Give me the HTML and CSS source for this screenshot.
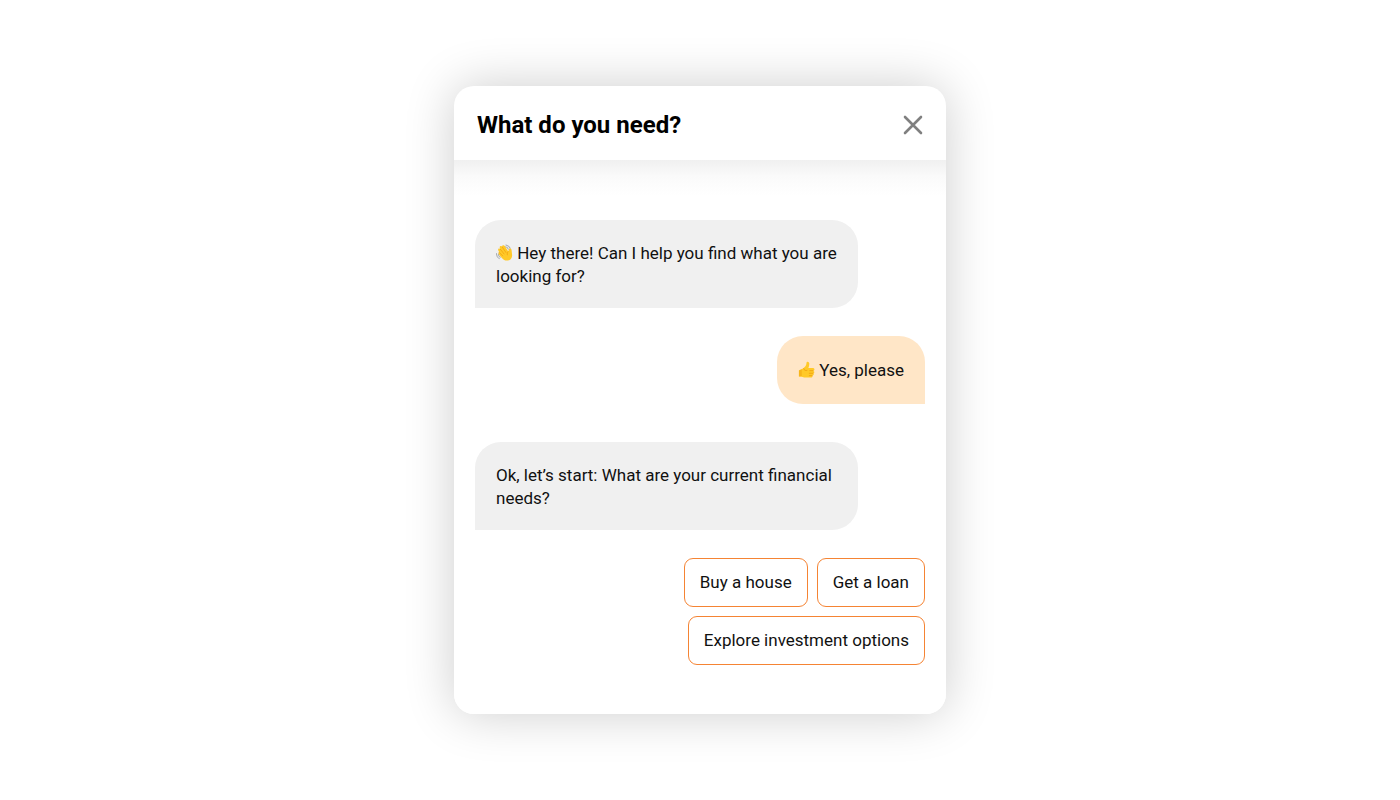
FILE: index.html
```html
<!DOCTYPE html>
<html lang="en">
<head>
    <meta charset="UTF-8">
    <meta name="viewport" content="width=device-width, initial-scale=1.0">
    <title>What do you need?</title>
    <link rel="stylesheet" href="styles.css">
</head>
<body>
    <main class="chat">
        <header class="chat-header">
            <h1>What do you need?</h1>
            <button type="button" class="close" aria-label="Close">
                <svg width="20" height="20" viewBox="0 0 20 20" fill="none" stroke="#808080" stroke-width="2.6" stroke-linecap="round">
                    <path d="M2 2L18 18M18 2L2 18"/>
                </svg>
            </button>
        </header>
        <div class="messages">
            <p class="message bot">
                <svg class="emoji" viewBox="0 0 36 36" aria-hidden="true">
                    <path d="M21 2C25 3 28 5 30 9M19 6C22 6 25 8 26 11M1 20C1 25 3 29 7 31M5 21C5 24 7 27 9 28" fill="none" stroke="#a9adb3" stroke-width="2.2" stroke-linecap="round"/>
                    <path d="M7 18L5 14C3 10 7 8 9 11L8 8C7 4 11 3 13 6C13 2 17 2 19 5L26 16L27 12C28 8 33 9 33 13L34 22C35 29 31 34 25 35C20 36 16 33 13 30L6 22C4 19 5 17 7 18Z" fill="#ffc928"/>
                    <path d="M9 11L17 21M13 6L21 18M7 18L14 25M26 16C24 18 23 20 24 23" fill="none" stroke="#ee9b0b" stroke-width="1.4" stroke-linecap="round"/>
                </svg>
                Hey there! Can I help you find what you are looking for?
            </p>
            <p class="message user">
                <svg class="emoji" viewBox="0 0 36 36" aria-hidden="true">
                    <path d="M2 20C5 18 9 17 12 15C15 12 18 9 18 4C18 0 24 1 24 6C24 9 23 12 22 15H31C36 15 36 20 32 21C36 22 35 26 32 26C35 28 33 31 30 31C32 33 30 35 27 35H16C11 35 7 32 2 33Z" fill="#ffc928"/>
                    <path d="M25 20.5H32M24 26H32M24 31H30M12 16C13 20 16 21 19 20" fill="none" stroke="#ee9b0b" stroke-width="1.5" stroke-linecap="round"/>
                    <path d="M2 20L8 18V32L2 33Z" fill="#f7b51c"/>
                </svg>
                Yes, please
            </p>
            <p class="message bot">Ok, let’s start: What are your current financial needs?</p>
            <div class="options">
                <button type="button" class="option">Buy a house</button>
                <button type="button" class="option">Get a loan</button>
                <button type="button" class="option">Explore investment options</button>
            </div>
        </div>
    </main>
</body>
</html>
```

FILE: styles.css
```css
* {
    box-sizing: border-box;
}
body {
    margin: 0;
    min-height: 100vh;
    display: flex;
    justify-content: center;
    align-items: center;
    background-color: #fff;
    color: #111;
    font-family: Roboto, Arial, sans-serif;
    font-size: 17px;
    line-height: 23px;
}
.chat {
    width: 100%;
    max-width: 492px;
    border-radius: 20px;
    background-color: #fff;
    box-shadow: 0 0 50px rgba(0, 0, 0, 0.2);
}
.chat-header {
    display: flex;
    justify-content: space-between;
    align-items: center;
    padding: 23px 23px 19px;
}
h1 {
    margin: 0;
    color: #000;
    font-size: 24px;
    font-weight: 700;
    line-height: 32px;
}
.close {
    display: flex;
    padding: 0;
    border: none;
    background: none;
    cursor: pointer;
}
.messages {
    display: flex;
    flex-direction: column;
    align-items: flex-start;
    padding: 60px 21px 49px;
    border-radius: 0 0 20px 20px;
    background: linear-gradient(#f0f0f0, #fafafa 16px, #fff 36px);
}
.message {
    margin: 0 0 28px;
    border-radius: 26px;
}
.bot {
    max-width: 85%;
    padding: 22px 12px 20px 21px;
    border-bottom-left-radius: 0;
    background-color: #f0f0f0;
}
.user {
    align-self: flex-end;
    margin-bottom: 38px;
    padding: 23px 21px 22px;
    border-bottom-right-radius: 0;
    background-color: #ffe6c7;
}
.emoji {
    width: 17px;
    height: 17px;
    vertical-align: -2px;
}
.options {
    display: flex;
    flex-wrap: wrap;
    justify-content: flex-end;
    align-self: flex-end;
    gap: 9px;
    max-width: 280px;
}
.option {
    padding: 12px 15px;
    border: 1px solid #f58434;
    border-radius: 9px;
    background-color: #fff;
    color: #111;
    font: inherit;
    cursor: pointer;
}
.option:hover {
    background-color: #ffe6c7;
}
```
